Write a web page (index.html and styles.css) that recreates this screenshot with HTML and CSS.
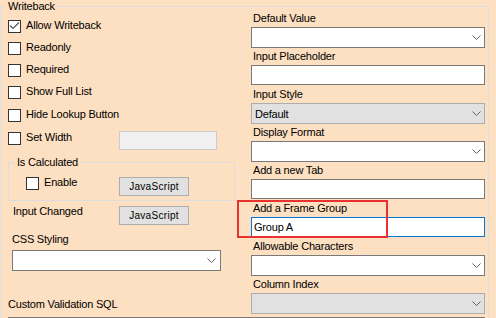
FILE: index.html
```html
<!DOCTYPE html>
<html lang="en">
<head>
  <meta charset="UTF-8" />
  <meta name="viewport" content="width=device-width, initial-scale=1.0"/>
  <title>Writeback</title>
  <link rel="stylesheet" href="styles.css">
</head>
<body>
  <fieldset class="group outer">
    <legend>Writeback</legend>
    <div class="columns">
      <div class="left">
        <div class="checks">
          <label class="check">
            <span class="box"><svg width="11" height="11" viewBox="0 0 11 11"><path d="M1 4.5 L4 7.5 L10 1.5" fill="none" stroke="#555" stroke-width="1.2"/></svg></span>Allow Writeback
          </label>
          <label class="check"><span class="box"></span>Readonly</label>
          <label class="check"><span class="box"></span>Required</label>
          <label class="check"><span class="box"></span>Show Full List</label>
          <label class="check shift"><span class="box"></span>Hide Lookup Button</label>
          <div class="check shift tall">
            <label class="opt w-set"><span class="box"></span>Set Width</label>
            <input class="text off width-box" type="text" disabled>
          </div>
        </div>

        <fieldset class="group calc">
          <legend>Is Calculated</legend>
          <div class="action enable">
            <label class="opt w-enable"><span class="box"></span>Enable</label>
            <button class="btn">JavaScript</button>
          </div>
        </fieldset>

        <div class="action changed">
          <span class="opt w-changed">Input Changed</span>
          <button class="btn">JavaScript</button>
        </div>

        <div class="caption css-label">CSS Styling</div>
        <div class="combo css-combo">
          <span></span>
          <svg class="chev" width="9" height="5" viewBox="0 0 9 5"><path d="M0.5 0.5 L4.5 4.5 L8.5 0.5" fill="none" stroke="#606060"/></svg>
        </div>

        <div class="caption sql-label">Custom Validation SQL</div>
      </div>

      <div class="right">
        <div class="field">
          <div class="caption">Default Value</div>
          <div class="combo"><span></span><svg class="chev" width="9" height="5" viewBox="0 0 9 5"><path d="M0.5 0.5 L4.5 4.5 L8.5 0.5" fill="none" stroke="#606060"/></svg></div>
        </div>
        <div class="field">
          <div class="caption">Input Placeholder</div>
          <input class="text" type="text">
        </div>
        <div class="field">
          <div class="caption">Input Style</div>
          <div class="combo off"><span>Default</span><svg class="chev" width="9" height="5" viewBox="0 0 9 5"><path d="M0.5 0.5 L4.5 4.5 L8.5 0.5" fill="none" stroke="#606060"/></svg></div>
        </div>
        <div class="field">
          <div class="caption">Display Format</div>
          <div class="combo"><span></span><svg class="chev" width="9" height="5" viewBox="0 0 9 5"><path d="M0.5 0.5 L4.5 4.5 L8.5 0.5" fill="none" stroke="#606060"/></svg></div>
        </div>
        <div class="field">
          <div class="caption">Add a new Tab</div>
          <input class="text" type="text">
        </div>
        <div class="field marked">
          <div class="caption">Add a Frame Group</div>
          <input class="text focus" type="text" value="Group A">
          <div class="mark"></div>
        </div>
        <div class="field">
          <div class="caption">Allowable Characters</div>
          <div class="combo"><span></span><svg class="chev" width="9" height="5" viewBox="0 0 9 5"><path d="M0.5 0.5 L4.5 4.5 L8.5 0.5" fill="none" stroke="#606060"/></svg></div>
        </div>
        <div class="field">
          <div class="caption">Column Index</div>
          <div class="combo off"><span></span><svg class="chev" width="9" height="5" viewBox="0 0 9 5"><path d="M0.5 0.5 L4.5 4.5 L8.5 0.5" fill="none" stroke="#606060"/></svg></div>
        </div>
      </div>

      <div class="sql-box"></div>
    </div>
  </fieldset>
</body>
</html>
```

FILE: styles.css
```css
body {
  margin: 0;
  background: #fddfc1;
  font-family: "Liberation Sans", Arial, sans-serif;
  font-size: 11px;
  letter-spacing: -0.2px;
  color: #000;
  overflow: hidden;
}

.group {
  margin: 0;
  padding: 0;
  min-width: 0;
  border: 1px solid #dcdcdc;
}

.group legend {
  padding: 0 2px;
  line-height: 12px;
}

.outer {
  margin-left: 1px;
  width: 488px;
  box-sizing: border-box;
}

.outer > legend {
  margin-left: 4px;
}

.columns {
  display: grid;
  grid-template-columns: 238px 1fr;
}

/* combos */
.combo {
  display: flex;
  align-items: center;
  justify-content: space-between;
  width: 234px;
  height: 21px;
  box-sizing: border-box;
  padding: 0 3px;
  border: 1px solid #7a7a7a;
  background: #fff;
}

.combo.off {
  background: #e1e1e1;
  border-color: #adadad;
}

.chev {
  display: block;
  flex: none;
}

/* left column */
.left {
  padding-left: 6px;
}

.checks {
  display: flex;
  flex-direction: column;
  gap: 9px;
  padding-top: 7px;
}

.check {
  display: flex;
  align-items: flex-start;
  height: 13px;
  line-height: 13px;
}

.check.shift {
  margin-top: 1px;
}

.check.tall {
  height: 19px;
}

.box {
  width: 13px;
  height: 13px;
  box-sizing: border-box;
  margin-top: 1px;
  margin-right: 5px;
  border: 1px solid #333;
  background: #fff;
  flex: none;
}

.box svg {
  display: block;
}

.opt {
  display: flex;
  align-items: flex-start;
  line-height: 13px;
  flex: none;
}

.w-set { width: 111px; }
.w-enable { width: 93px; }
.w-changed { width: 106px; }

.text {
  display: block;
  width: 234px;
  height: 20px;
  box-sizing: border-box;
  margin: 0;
  padding: 0 2px;
  border: 1px solid #7a7a7a;
  background: #fff;
  font: inherit;
  letter-spacing: inherit;
  color: #000;
  outline: none;
}

.text.off {
  background: #f0f0f0;
  border-color: #cccccc;
}

.text.focus {
  border-color: #0078d7;
}

.width-box {
  width: 98px;
  height: 19px;
}

.calc {
  margin-top: 6px;
  width: 227px;
  box-sizing: border-box;
  padding: 0 0 4px 6px;
}

.action {
  display: flex;
  align-items: flex-start;
}

.enable {
  padding-top: 8px;
  padding-left: 11px;
}

.btn {
  width: 70px;
  height: 19px;
  margin-top: 1px;
  padding: 0;
  border: 1px solid #adadad;
  background: #e1e1e1;
  font-family: "Liberation Sans", Arial, sans-serif;
  font-size: 10px;
  letter-spacing: 0.3px;
  color: #000;
}

.changed {
  margin-top: 4px;
  padding-left: 5px;
}

.caption {
  line-height: 13px;
  padding-left: 2px;
}

.css-label {
  margin-top: 8px;
  padding-left: 4px;
}

.combo.css-combo {
  margin: 4px 0 0 4px;
  width: 209px;
  padding-right: 4px;
}

.sql-label {
  margin-top: 27px;
  padding-left: 0;
}

/* right column */
.right {
  padding-left: 11px;
}

.field {
  position: relative;
  display: flex;
  flex-direction: column;
  gap: 2px;
  height: 38px;
}

.mark {
  position: absolute;
  left: -14px;
  top: -2px;
  width: 151px;
  height: 38px;
  box-sizing: border-box;
  border: 2px solid #e8322f;
}

.sql-box {
  grid-column: 1 / -1;
  margin: 1px 0 0 6px;
  width: 477px;
  height: 24px;
  box-sizing: border-box;
  border: 1px solid #7a7a7a;
  background: #fff;
}
```
